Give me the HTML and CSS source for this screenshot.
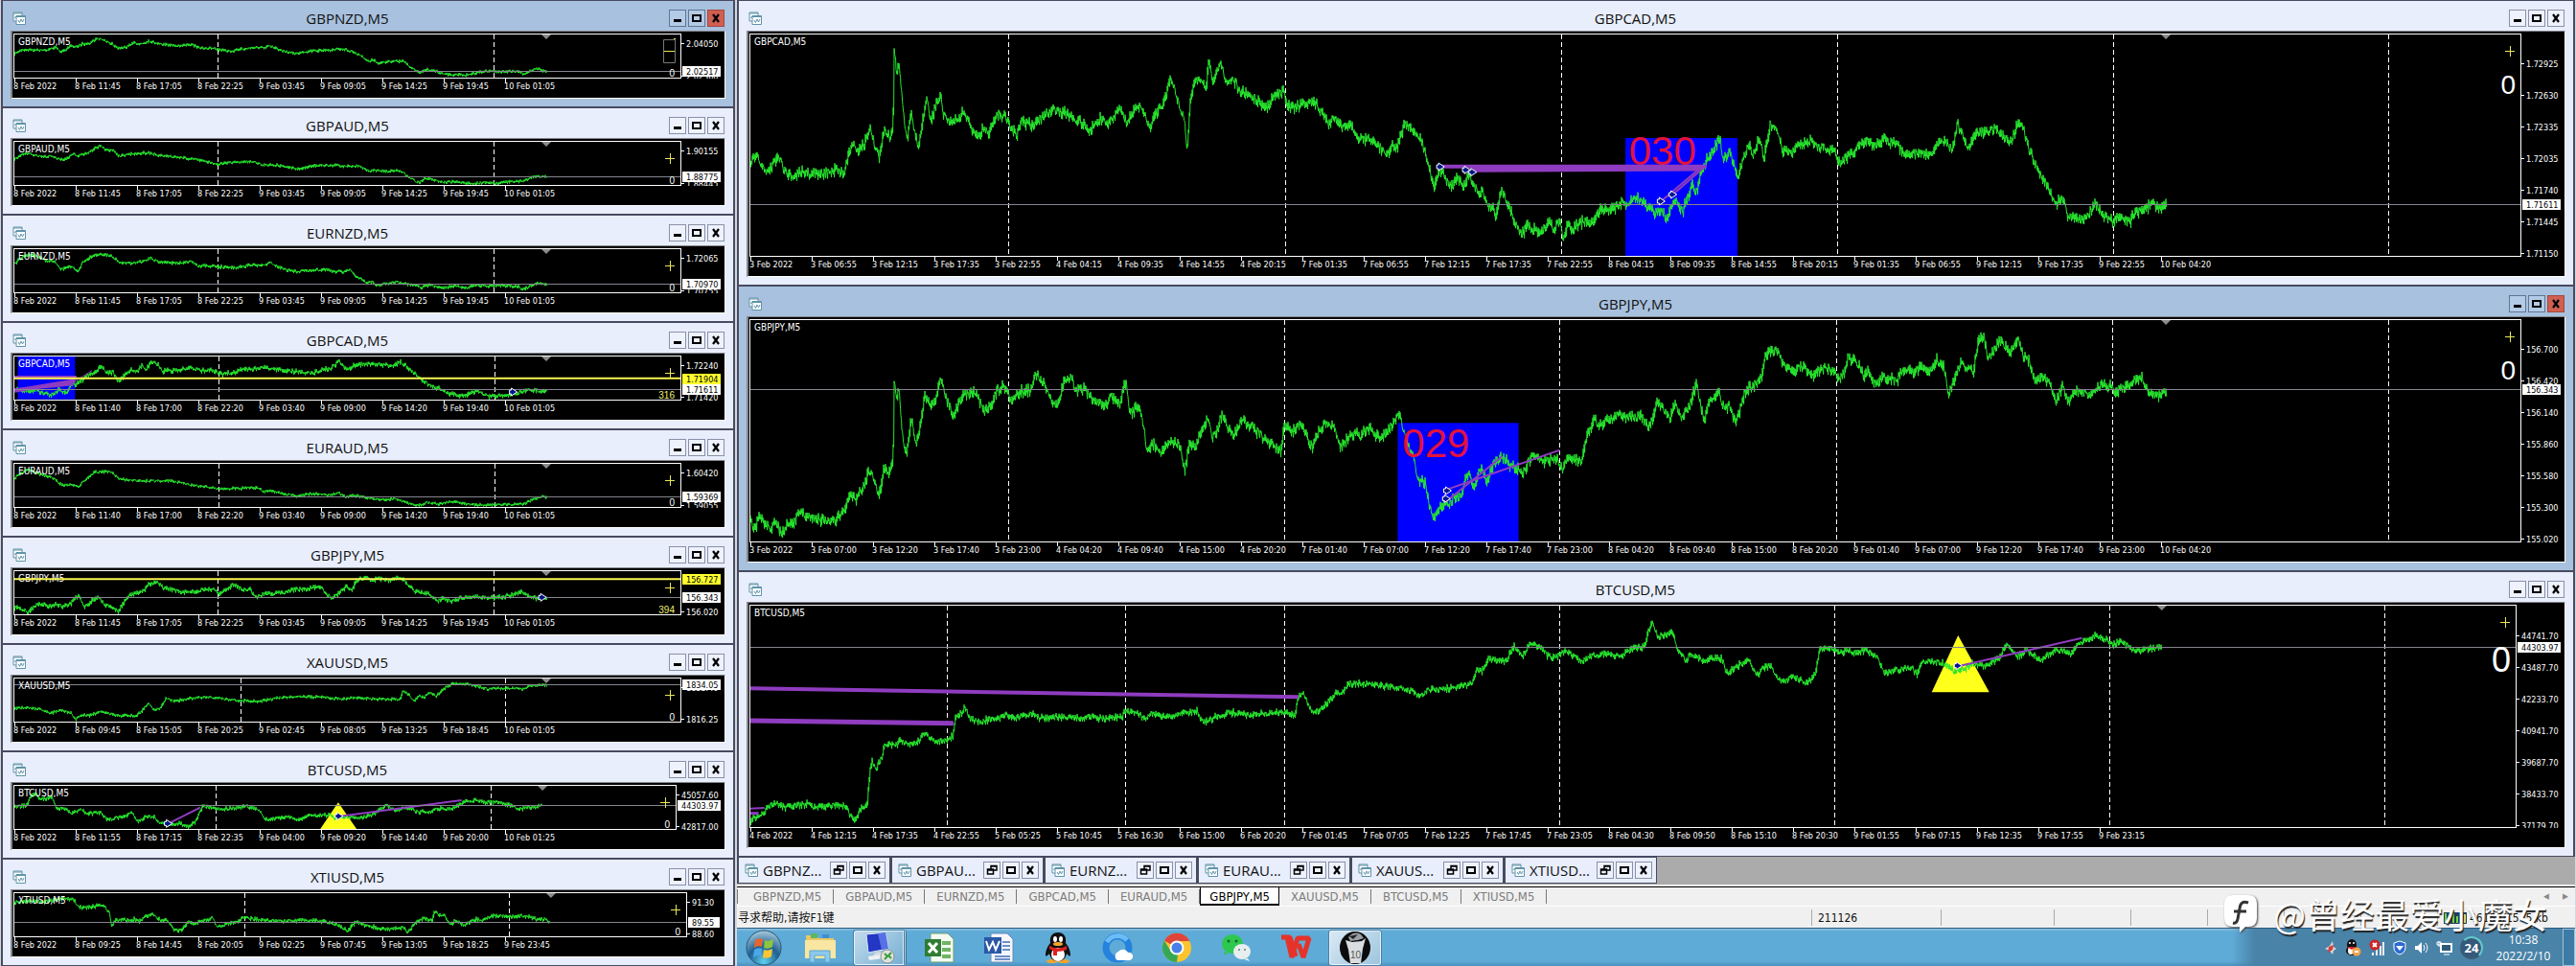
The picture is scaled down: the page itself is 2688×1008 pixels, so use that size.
FILE: index.html
```html
<!DOCTYPE html>
<html lang="zh-CN">
<head>
  <meta charset="utf-8">
  <title>GBPJPY,M5</title>
  <link rel="stylesheet" href="styles.css">
</head>
<body>
  <svg class="defs" width="0" height="0" aria-hidden="true">
    <symbol id="i-chart" viewBox="0 0 14 14">
      <path d="M1 1h9v9H1z" fill="#fff" stroke="#5f93a8"/>
      <path d="M1 2h9" stroke="#5f93a8"/>
      <path d="M2.500 7l1-2 1 1" stroke="#5f93a8" fill="none"/>
      <path d="M4 4.500h9.500v9H4z" fill="#fff" stroke="#5f93a8"/>
      <path d="M4 5.500h9.500" stroke="#5f93a8"/>
      <path d="M6 9l1.500 2.500L9 8l1.500 3L12 8" fill="none" stroke="#5f93a8"/>
    </symbol>
    <symbol id="i-min" viewBox="0 0 16 16"><path d="M4 9h8v3H4z"/></symbol>
    <symbol id="i-max" viewBox="0 0 16 16"><path d="M4 5h8v6H4z" fill="none" stroke="#000" stroke-width="2"/></symbol>
    <symbol id="i-close" viewBox="0 0 16 16"><path d="M5 4l6 8M11 4l-6 8" fill="none" stroke="#000" stroke-width="2.200"/></symbol>
    <symbol id="i-restore" viewBox="0 0 16 16"><path d="M7 7V3.500h6V8h-3M3.500 7h6v5h-6zM3 8h7M7 4h6" fill="none" stroke="#000" stroke-width="1.500"/></symbol>
  </svg>

  <div class="desktop">
    <section class="side" id="side"></section>

    <section class="main">
      <div class="stack" id="stack"></div>
      <div class="minimized" id="minimized"></div>

      <nav class="tabs">
        <a href="#">GBPNZD,M5</a>
        <a href="#">GBPAUD,M5</a>
        <a href="#">EURNZD,M5</a>
        <a href="#">GBPCAD,M5</a>
        <a href="#">EURAUD,M5</a>
        <a href="#" class="active">GBPJPY,M5</a>
        <a href="#">XAUUSD,M5</a>
        <a href="#">BTCUSD,M5</a>
        <a href="#">XTIUSD,M5</a>
        <span class="arrows"><button aria-label="Scroll left">◂</button><button aria-label="Scroll right">▸</button></span>
      </nav>

      <div class="status">
        <span class="help">寻求帮助,请按F1键</span>
        <span class="profile">211126</span>
        <span class="wide"></span>
        <span></span>
        <span></span>
        <span></span>
        <span></span>
        <span></span>
        <span class="traffic">
          <svg width="24" height="12" viewBox="0 0 24 12"><path d="M0 0h24v12H0z" fill="#20405c"/><path d="M2 1v10M6 3v8M10 1v10M14 4v7" stroke="#7bd13a" stroke-width="2"/><path d="M18 1v10M22 2v9" stroke="#d9dd7a" stroke-width="2"/></svg>
          46153/1545 kb
        </span>
      </div>

      <footer class="taskbar">
        <button class="task start" aria-label="Start">
          <svg width="38" height="38" viewBox="0 0 38 38">
            <defs><radialGradient id="orb" cx=".5" cy=".9" r=".9"><stop offset="0" stop-color="#5fd0ee"/><stop offset=".5" stop-color="#1f5f92"/><stop offset="1" stop-color="#a9cbdc"/></radialGradient></defs>
            <circle cx="19" cy="19" r="18" fill="url(#orb)" stroke="#285573"/>
            <path d="M10 11q4-3 8-1l-1 8q-4-2-8 1z" fill="#e8642c"/>
            <path d="M20 11q4 2 9-1l-1 8q-4 3-9 1z" fill="#8cc63f"/>
            <path d="M9 21q4-3 8-1l-1 8q-4-2-8 1z" fill="#4aa8e8"/>
            <path d="M19 21q4 2 9-1l-1 8q-4 3-9 1z" fill="#fbc62f"/>
          </svg>
        </button>
        <button class="task" aria-label="Explorer">
          <svg width="36" height="34" viewBox="0 0 36 34">
            <path d="M3 4h11l2 3h16v20H3z" fill="#e9c766"/><path d="M8 2h7v5H8z" fill="#5cb85c"/><path d="M20 3h7v4h-7z" fill="#3f8fd0"/>
            <path d="M2 9h32v19H2z" fill="#f9e6a2"/><path d="M7 32V20h21v12h-5v-7H12v7z" fill="#8dc9ec" stroke="#5aa5d0"/>
          </svg>
        </button>
        <button class="task on double" aria-label="Remote desktop">
          <svg width="36" height="34" viewBox="0 0 36 34">
            <path d="M5 3l20-2 3 17-21 4z" fill="#2336c4" stroke="#dfe6f3"/><path d="M17 2l8-1 3 17-7 1z" fill="#5670e6"/>
            <path d="M14 22l6-1 2 5H12z" fill="#d7dce4"/><path d="M7 26l15-2 1 4-15 2z" fill="#eef1f5"/>
            <circle cx="27" cy="26" r="7" fill="#dfe3e0" stroke="#89938c"/><path d="M24 23l3 3-3 3M31 22l-3 3 3 3" stroke="#3b9c3a" stroke-width="2" fill="none"/>
          </svg>
        </button>
        <button class="task" aria-label="Excel">
          <svg width="34" height="32" viewBox="0 0 34 32">
            <path d="M8 1h18l6 6v24H8z" fill="#f3faf2" stroke="#6f9f6a"/><path d="M20 9h9v4h-9zM20 16h9v4h-9zM20 23h9v4h-9z" fill="#6fb463"/>
            <path d="M2 7h17v18H2z" fill="#2f7d32"/><path d="M6 11l9 10M15 11L6 21" stroke="#fff" stroke-width="3"/>
          </svg>
        </button>
        <button class="task" aria-label="Word">
          <svg width="34" height="32" viewBox="0 0 34 32">
            <path d="M9 1h17l6 6v24H9z" fill="#f4f7fc" stroke="#6e88b8"/><path d="M21 10h8M21 14h8M21 18h8M13 25h16M13 28h16" stroke="#6d8fc8" stroke-width="2"/>
            <path d="M2 5h18v17H2z" fill="#2a57a5"/><path d="M4 9l3 9 4-8 3 8 4-9" stroke="#fff" stroke-width="2" fill="none"/>
          </svg>
        </button>
        <button class="task" aria-label="QQ">
          <svg width="30" height="34" viewBox="0 0 30 34">
            <ellipse cx="9" cy="31" rx="6" ry="2" fill="#f2a42b"/><ellipse cx="21" cy="31" rx="6" ry="2" fill="#f2a42b"/>
            <path d="M15 1c-6 0-9 4-8 11-4 5-5 9-5 13 1 2 3-1 4-2 1 5 4 8 9 8s8-3 9-8c1 1 3 4 4 2 0-4-1-8-5-13 1-7-2-11-8-11z" fill="#111"/>
            <ellipse cx="15" cy="24" rx="7" ry="7" fill="#fff"/><ellipse cx="12" cy="8" rx="2" ry="3" fill="#fff"/><ellipse cx="18" cy="8" rx="2" ry="3" fill="#fff"/>
            <ellipse cx="15" cy="13" rx="5" ry="2" fill="#f2a42b"/><path d="M6 15q9 5 18 0v4q-5 2-10 2v4h-4v-5l-4-2z" fill="#e02020"/>
          </svg>
        </button>
        <button class="task" aria-label="QQ Browser">
          <svg width="34" height="32" viewBox="0 0 34 32">
            <circle cx="17" cy="16" r="12" fill="none" stroke="#2583dd" stroke-width="7"/><path d="M6 10a13 13 0 0 1 21-2" fill="none" stroke="#6bbcf5" stroke-width="5"/>
            <path d="M17 29a5 5 0 0 1 1-9 6 6 0 0 1 10 1 4 4 0 0 1 2 8z" fill="#fff"/>
          </svg>
        </button>
        <button class="task" aria-label="Chrome">
          <svg width="32" height="32" viewBox="0 0 32 32">
            <circle cx="16" cy="16" r="15" fill="#fbc42d"/><path d="M16 16L3 8.500A15 15 0 0 1 29.500 9H16z" fill="#e0453a"/>
            <path d="M16 31A15 15 0 0 1 3 8.500L10 20l7 3z" fill="#36a853"/><circle cx="16" cy="16" r="7.500" fill="#fff"/><circle cx="16" cy="16" r="5.500" fill="#4a7fe8"/>
          </svg>
        </button>
        <button class="task" aria-label="WeChat">
          <svg width="34" height="30" viewBox="0 0 34 30">
            <path d="M5 19l-1 4 5-3z" fill="#2dc84f"/><ellipse cx="13" cy="11" rx="11" ry="10" fill="#2dc84f"/><circle cx="9" cy="8" r="1.500" fill="#17642a"/><circle cx="17" cy="8" r="1.500" fill="#17642a"/>
            <path d="M29 26l2 3-6-2z" fill="#e6eeee"/><ellipse cx="23" cy="19" rx="9" ry="8" fill="#e6eeee"/><circle cx="20" cy="17" r="1" fill="#6b7b7b"/><circle cx="26" cy="17" r="1" fill="#6b7b7b"/>
          </svg>
        </button>
        <button class="task" aria-label="WPS Office">
          <svg width="34" height="28" viewBox="0 0 34 28">
            <path d="M2 3h9l6 20M8 3l5 21 6-20h12l-6 20-5-14" fill="none" stroke="#e5332a" stroke-width="5" stroke-linejoin="bevel"/>
          </svg>
        </button>
        <button class="task on" aria-label="Trader">
          <svg width="32" height="36" viewBox="0 0 32 36">
            <ellipse cx="16" cy="18" rx="16" ry="17" fill="#0c0c0c"/><path d="M6 10l7 2 10-1 4-3-3 11-2 15H11L9 20z" fill="#d9dde0"/>
            <path d="M9 7q6-7 13-3l3 4-6 2-8 1z" fill="#9ba0a5"/><path d="M10 6l9-2-5 5z" fill="#222"/><text x="11" y="29" font-family="Liberation Sans" font-size="10" fill="#555">10</text>
          </svg>
        </button>

        <div class="tray">
          <svg width="14" height="16" viewBox="0 0 14 16"><path d="M1 9l5-3 3-5 1 6 3 2-3 2-1 4-3-4z" fill="#d8d4d6"/><path d="M5 7l5-2-1 5-5 3z" fill="#d43c3a"/></svg>
          <svg width="18" height="18" viewBox="0 0 18 18"><ellipse cx="8" cy="6" rx="5" ry="6" fill="#111"/><ellipse cx="8" cy="12" rx="6" ry="5" fill="#111"/><ellipse cx="7" cy="12" rx="3" ry="4" fill="#fff"/><circle cx="6" cy="4" r="1" fill="#fff"/><circle cx="10" cy="4" r="1" fill="#fff"/><path d="M3 8h9l-4 3z" fill="#e02020"/><circle cx="13" cy="13" r="4.500" fill="#f3a24c"/><path d="M11 13h4" stroke="#fff" stroke-width="2"/></svg>
          <svg width="18" height="18" viewBox="0 0 18 18"><path d="M5 17v-3M9 17v-6M13 17V7M16 17V3" stroke="#eceff2" stroke-width="2"/><circle cx="7" cy="6" r="5.500" fill="#cf2426"/><path d="M5 4l4 4M9 4L5 8" stroke="#fff" stroke-width="2"/></svg>
          <svg width="16" height="16" viewBox="0 0 16 16"><path d="M8 1l6 2v5q0 5-6 7-6-2-6-7V3z" fill="#2a6bd2" stroke="#fff"/><path d="M4 6h8l-4 5z" fill="#fff"/></svg>
          <svg width="16" height="16" viewBox="0 0 16 16"><path d="M1 6h3l4-4v12l-4-4H1z" fill="#fff"/><path d="M10 5q2 3 0 6M12 3q4 5 0 10" stroke="#fff" fill="none"/></svg>
          <svg width="18" height="16" viewBox="0 0 18 16"><path d="M5 4h11v8H5z" fill="#2d5a78" stroke="#fff" stroke-width="2"/><path d="M8 15h6M3 1v6M1 2h4v3H1z" stroke="#fff" fill="none"/></svg>
          <span class="temp">24</span>
          <time class="clock">10:38<br>2022/2/10</time>
          <button class="peek" aria-label="Show desktop"></button>
        </div>
      </footer>
    </section>
  </div>

  <div class="watermark">
    <svg width="36" height="40" viewBox="0 0 36 40">
      <path d="M10 1h16q9 0 9 9v15q0 9-9 9h-3l-6 6v-6h-7q-9 0-9-9V10q0-9 9-9z" fill="#fff"/>
      <path d="M26 9q-8-3-9 6l-2 11q-1 5-5 4M11 18h13" fill="none" stroke="#333" stroke-width="3"/>
    </svg>
    <span>@曾经最爱小魔女</span>
  </div>

  <script src="charts.js"></script>
</body>
</html>
```
FILE: styles.css
```css
* {
  box-sizing: border-box;
}

body {
  margin: 0;
  background: #d4d7e0;
  color: #111;
  font-family: "DejaVu Sans Condensed", "Noto Sans CJK SC", sans-serif;
  font-size: 12px;
}

button {
  padding: 0;
  border: 0;
  background: none;
  font: inherit;
}

a {
  color: inherit;
  text-decoration: none;
}

.defs {
  position: absolute;
}

.desktop {
  display: grid;
  grid-template-columns: minmax(0, 766fr) minmax(0, 1918fr);
  grid-template-rows: minmax(0, 1fr);
  gap: 2px;
  height: 100vh;
  padding: 0 1px;
}

.side {
  display: grid;
  grid-template-rows: repeat(9, minmax(0, 1fr));
}

.main {
  display: flex;
  flex-direction: column;
  min-width: 0;
}

.stack {
  flex: 1;
  display: grid;
  grid-template-rows: repeat(3, minmax(0, 1fr));
  min-height: 0;
}

/* chart windows */

.win {
  display: flex;
  flex-direction: column;
  min-height: 0;
  padding: 0 8px 8px;
  border: solid #474b60;
  border-width: 1px 2px;
  background: #e8eefc;
}

.win.active {
  background: #a8c1de;
}

.bar {
  flex: none;
  display: flex;
  align-items: center;
  height: 31px;
  padding: 4px 1px 0 2px;
}

.bar h2 {
  flex: 1;
  margin: 0;
  font: 15px/24px "Open Sans", "Noto Sans", sans-serif;
  text-align: center;
}

.icon {
  width: 14px;
  height: 14px;
}

.controls {
  display: flex;
  gap: 2px;
}

.controls button {
  width: 18px;
  height: 18px;
  border: 1px solid #8a90a6;
  background: #edf2fd;
}

.controls svg {
  display: block;
  width: 16px;
  height: 16px;
}

.active .controls button {
  border-color: #5e7596;
  background: #b4cbe6;
}

.active .controls button:last-child {
  border-color: #a8463c;
  background: #cf5f51;
}

.well {
  flex: 1;
  display: grid;
  grid-template-columns: minmax(0, 1fr) auto;
  grid-template-rows: minmax(0, 1fr) 20px;
  min-height: 0;
  padding: 2px 0 0 1px;
  border: 2px solid #84868c;
  border-width: 1px 1px 1px 2px;
  border-right-color: #fff;
  border-bottom-color: #fff;
  background: #000;
}

.plot {
  width: 100%;
  height: 100%;
  border: 1px solid #fff;
}

.prices {
  height: 100%;
}

.prices.short { width: 39px; }
.prices.normal { width: 45px; }
.prices.long { width: 50px; }

.prices text {
  fill: #fff;
  font-size: 9px;
}

.prices .tag {
  fill: #000;
}

.times {
  grid-column: 1 / -1;
  display: flex;
  margin: 0;
  padding: 0;
  overflow: hidden;
  list-style: none;
  color: #fff;
  font-size: 9px;
  line-height: 17px;
  white-space: nowrap;
}

.times li {
  flex: none;
  width: 64px;
  background: linear-gradient(#fff, #fff) 1px 0 / 1px 4px no-repeat;
}

/* plot contents */

.name {
  fill: #fff;
  font-size: 10px;
}

.series {
  fill: none;
  stroke: #27e62e;
}

.day {
  stroke: #fff;
  stroke-dasharray: 5 3;
}

.bid {
  stroke: #85858f;
}

.shift {
  fill: #8b8b8b;
}

.plus {
  stroke: #e9e659;
}

.count {
  fill: #fff;
  font-family: "Liberation Sans", Arial, sans-serif;
  text-anchor: end;
}

.count.hit {
  fill: #f2ee6e;
}

.note {
  fill: #e3123c;
  font-family: "Liberation Sans", Arial, sans-serif;
}

.point {
  fill: #00148c;
  stroke: #fff;
}

/* minimized windows */

.minimized {
  display: flex;
  height: 31px;
  border-bottom: 2px solid #f3f3f3;
  background: #ababab;
}

.mini {
  display: flex;
  align-items: center;
  width: 160px;
  height: 28px;
  padding: 0 4px 0 6px;
  border: 1px solid #474b60;
  border-left-width: 2px;
  background: #e8eefc;
}

.mini h3 {
  flex: 1;
  margin: 0 0 0 5px;
  font: 15px/24px "Open Sans", "Noto Sans", sans-serif;
}

/* tabs and status bar */

.tabs {
  display: flex;
  height: 20px;
  border-top: 1px solid #000;
  background: #f0f0f0;
  color: #7c7c7c;
  font-size: 13px;
  line-height: 18px;
}

.tabs a {
  margin: 2px 0;
  padding: 0 12px;
  border-right: 1px solid #777;
  line-height: 15px;
}

.tabs a:first-child {
  padding-left: 16px;
  border-left: 1px solid #777;
}

.tabs .active {
  margin: 0;
  padding: 0 9px;
  border: solid #000;
  border-width: 0 1px 2px;
  background: #fff;
  color: #000;
  line-height: 19px;
}

.arrows {
  margin-left: auto;
}

.arrows button {
  width: 20px;
  color: #888;
}

.status {
  display: flex;
  height: 23px;
  border-top: 1px solid #fff;
  background: #f0f0f0;
}

.status span {
  width: 80px;
  margin: 3px 0 2px;
  padding-left: 6px;
  border-left: 1px solid #aaa;
  line-height: 18px;
}

.status .help {
  flex: 1;
  padding-left: 1px;
  border: 0;
}

.status .profile {
  width: 135px;
}

.status .wide {
  width: 118px;
}

.status .traffic {
  display: flex;
  align-items: center;
  gap: 3px;
  width: 144px;
}

/* taskbar */

.taskbar {
  display: flex;
  align-items: center;
  height: 40px;
  border-top: 1px solid #2c5b80;
  background: linear-gradient(#8fc3e2 0, #5fabd7 3px, #5fabd7 34px, #4a90bd 100%);
}

.task {
  display: grid;
  place-items: center;
  width: 56px;
  height: 38px;
  margin: 0 3px;
}

.task.start {
  margin: 0;
}

.task.on {
  border: 1px solid #4d7fa3;
  border-radius: 3px;
  background: linear-gradient(135deg, #dbeaf4, #9cc4de);
  box-shadow: inset 0 0 0 1px #e4f1f9;
}

.task.on.double {
  border-right: 3px double #3d7196;
  background: linear-gradient(135deg, #c3dcec, #74afd3);
}

.tray {
  display: flex;
  align-items: center;
  align-self: stretch;
  gap: 7px;
  width: 358px;
  margin-left: auto;
  justify-content: flex-end;
  background: linear-gradient(90deg, #5fabd700 0, #4983a8 24px);
  color: #fff;
}

.temp {
  width: 24px;
  border: 2px solid #3a5d78;
  border-top-color: #63c9c9;
  border-right-color: #63c9c9;
  border-radius: 50%;
  background: #35597a;
  font: bold 13px/20px "Open Sans", sans-serif;
  text-align: center;
}

.clock {
  width: 70px;
  margin-right: -1px;
  font: 12px/17px "Open Sans", "Noto Sans", sans-serif;
  text-align: center;
}

.peek {
  align-self: stretch;
  width: 13px;
  border: 1px solid #9cc5dd;
  background: #3c7ba5;
}

/* sits above the status bar and the taskbar */
.watermark {
  position: absolute;
  right: 30px;
  bottom: 34px;
  display: flex;
  align-items: center;
  gap: 16px;
  color: #fff;
  font: 36px/42px "Noto Sans CJK SC", sans-serif;
  text-shadow: 1px 2px 1px #222;
  pointer-events: none;
}

.watermark svg {
  filter: drop-shadow(1px 1px 1px #444);
}
```
FILE: charts.js
```js
const PURPLE = '#8f3cc0';

// Samples are recorded in sheet units, unitX and unitY of them to a pixel.
const SMALL = { x0: 30, unitX: 2.036, unitY: 3 };
const LARGE = { x0: 21, unitX: 1.633, unitY: 3 };

const T45 = '8 Feb 2022|8 Feb 11:45|8 Feb 17:05|8 Feb 22:25|9 Feb 03:45|9 Feb 09:05|9 Feb 14:25|9 Feb 19:45|10 Feb 01:05';
const T40 = '8 Feb 2022|8 Feb 11:40|8 Feb 17:00|8 Feb 22:20|9 Feb 03:40|9 Feb 09:00|9 Feb 14:20|9 Feb 19:40|10 Feb 01:05';

const small = [
  {
    name: 'GBPNZD,M5', active: true, y0: 106, amp: 9, bid: 223, tag: '2.02517', shift: 1160, boxed: true,
    days: [461, 1048], prices: [['2.04050', 136], ['2.02360', 239]], times: T45,
    data: '30,165 40,158 55,153 75,156 100,155 115,146 128,158 138,158 150,138 160,145 175,135 190,135 200,122 210,119 225,128 237,135 248,150 265,146 285,133 300,135 315,126 335,135 360,140 385,142 405,137 425,150 445,148 465,155 490,158 510,152 540,147 560,148 572,141 585,150 605,160 630,166 655,158 690,156 715,152 735,154 755,165 770,175 783,192 790,185 805,196 830,190 855,190 875,212 890,225 905,216 925,222 950,232 995,233 1015,225 1040,219 1060,223 1100,221 1112,230 1125,219 1145,214 1160,224'
  },
  {
    name: 'GBPAUD,M5', y0: 442, amp: 9, bid: 553, tag: '1.88775', shift: 1160,
    days: [461, 1048], prices: [['1.90155', 472], ['1.88445', 573]], times: T45,
    data: '30,497 45,482 60,478 90,490 110,485 125,497 140,497 155,480 165,485 185,478 200,462 212,455 225,467 240,468 250,487 270,482 290,478 315,476 335,485 360,488 395,493 425,500 460,511 490,507 535,503 555,513 590,515 630,528 660,517 710,515 735,519 760,517 785,534 800,530 820,535 850,532 865,550 890,571 900,558 915,560 935,568 960,568 1000,573 1030,569 1055,572 1080,567 1110,566 1130,552 1160,550'
  },
  {
    name: 'EURNZD,M5', y0: 778, amp: 10, bid: 889, tag: '1.70970', shift: 1160,
    days: [461, 1048], prices: [['1.72065', 808], ['1.70755', 909]], times: T45,
    data: '30,823 45,805 60,795 80,800 100,817 115,815 130,842 145,830 165,845 175,820 195,800 205,793 235,798 255,822 280,822 300,818 318,806 335,818 380,822 405,817 420,830 460,832 500,838 530,828 560,830 573,818 590,835 620,848 650,845 690,842 710,850 720,842 730,852 740,840 760,868 780,885 790,880 800,892 825,885 845,880 870,890 895,898 915,890 940,900 970,893 990,900 1010,890 1040,894 1080,892 1100,895 1110,905 1125,892 1145,885 1160,890'
  },
  {
    name: 'GBPCAD,M5', y0: 106, amp: 14, bid: 212, tag: '1.71611', shift: 1160, count: '316',
    days: [463, 1050], prices: [['1.72240', 136], ['1.71420', 236]], times: T40,
    target: ['1.71904', 177],
    rects: [[37, 106, 159, 240]],
    lines: [[30, 172, 162, 172, 4], [30, 213, 160, 182, 4], [30, 210, 155, 192, 3], [150, 192, 195, 150, 1]],
    points: [[1090, 217]],
    data: '30,208 60,215 75,210 90,222 110,225 125,210 140,220 150,195 165,190 185,165 200,155 215,135 225,160 240,155 250,185 265,165 275,148 290,155 300,135 310,145 322,122 335,130 345,152 370,150 405,142 430,150 450,150 470,162 500,155 520,145 560,143 600,148 640,155 665,157 685,145 700,145 720,122 735,148 745,140 760,130 800,132 840,133 850,122 865,140 880,158 900,185 925,205 940,210 955,222 980,230 1000,220 1012,212 1030,228 1050,232 1080,225 1100,220 1130,210 1145,213 1160,212'
  },
  {
    name: 'EURAUD,M5', y0: 442, amp: 9, bid: 547, tag: '1.59369', shift: 1160,
    days: [463, 1050], prices: [['1.60420', 472], ['1.59055', 573]], times: T40,
    data: '30,487 45,470 60,460 85,475 110,485 130,508 155,508 165,515 180,492 200,468 235,467 250,488 280,495 320,495 360,495 400,507 430,513 460,520 510,519 525,515 550,520 560,530 575,527 600,535 630,543 660,536 700,540 718,532 735,547 750,540 780,548 810,555 840,550 860,563 890,572 905,563 930,567 960,560 990,567 1030,572 1080,569 1110,569 1130,555 1150,546 1160,548'
  },
  {
    name: 'GBPJPY,M5', y0: 778, amp: 14, bid: 861, tag: '156.343', shift: 1160, count: '394',
    days: [461, 1048], prices: [['156.020', 908]], times: T45,
    target: ['156.727', 806],
    points: [[1152, 860]],
    data: '30,893 45,895 60,908 75,885 90,880 105,888 120,882 135,890 150,878 165,855 180,890 195,870 210,860 220,882 235,888 250,905 270,858 285,850 305,840 315,818 335,815 345,830 370,838 400,845 430,835 455,835 465,850 480,835 495,820 515,838 530,835 542,860 560,850 600,845 630,835 655,832 680,828 690,845 705,865 720,845 735,825 745,838 762,800 780,797 790,812 800,800 825,808 850,797 865,820 880,840 905,848 920,860 930,872 940,860 955,872 980,862 1010,858 1050,862 1080,855 1110,843 1120,855 1140,864 1160,860'
  },
  {
    name: 'XAUUSD,M5', y0: 112, amp: 9, bid: 133, tag: '1834.05', shift: 1160,
    days: [510, 1072], prices: [['1833.40', 143], ['1816.25', 241]],
    times: '8 Feb 2022|8 Feb 09:45|8 Feb 15:05|8 Feb 20:25|9 Feb 02:45|9 Feb 08:05|9 Feb 13:25|9 Feb 18:45|10 Feb 01:05',
    data: '30,207 55,202 80,207 105,220 130,212 150,220 160,240 175,225 190,228 210,215 230,222 250,228 290,228 300,215 315,190 325,210 340,205 352,175 370,183 400,175 440,170 470,175 500,181 555,183 590,173 620,168 680,170 720,176 760,173 800,176 850,177 855,150 870,165 878,185 890,165 900,172 910,155 925,168 945,142 960,128 990,128 1010,135 1035,145 1070,142 1110,145 1125,135 1160,132'
  },
  {
    name: 'BTCUSD,M5', y0: 448, amp: 12, bid: 511, tag: '44303.97', shift: 1152, axis: 'long',
    days: [457, 1042], prices: [['45057.60', 478], ['42817.00', 577]],
    times: '8 Feb 2022|8 Feb 11:55|8 Feb 17:15|8 Feb 22:35|9 Feb 04:00|9 Feb 09:20|9 Feb 14:40|9 Feb 20:00|10 Feb 01:25',
    triangle: [[718, 500], [680, 583], [757, 583]],
    lines: [[357, 566, 425, 516, 2], [722, 543, 980, 493, 2]],
    points: [[357, 566], [720, 543]],
    data: '30,513 55,510 65,480 75,475 85,490 110,485 120,520 135,520 150,535 170,522 185,535 215,532 225,555 260,545 280,533 292,562 305,548 325,543 340,565 360,570 380,565 400,577 415,560 425,525 430,512 450,518 470,520 500,518 525,513 550,525 560,552 580,552 615,545 632,558 650,540 680,540 700,540 710,550 730,545 760,548 790,540 810,520 820,510 840,525 870,515 885,530 910,530 935,518 960,520 985,498 1010,492 1030,500 1060,500 1080,508 1100,520 1125,515 1150,510'
  },
  {
    name: 'XTIUSD,M5', y0: 784, amp: 12, bid: 877, tag: '89.55', shift: 1170, axis: 'short',
    days: [518, 1080], prices: [['91.30', 814], ['88.60', 914]],
    times: '8 Feb 2022|8 Feb 09:25|8 Feb 14:45|8 Feb 20:05|9 Feb 02:25|9 Feb 07:45|9 Feb 13:05|9 Feb 18:25|9 Feb 23:45',
    data: '30,812 60,808 90,812 125,803 155,803 165,825 180,830 200,825 220,820 232,850 236,885 245,870 260,868 275,870 285,865 295,873 310,855 325,850 340,870 355,868 370,900 385,900 400,875 415,880 430,870 450,862 462,890 480,880 500,875 515,862 560,868 590,872 660,868 700,877 720,885 738,903 755,872 775,885 800,892 825,898 855,890 866,908 880,880 900,862 918,868 922,838 935,855 942,848 957,885 965,868 985,885 1010,865 1025,870 1045,855 1080,857 1115,855 1140,867 1155,865 1168,878'
  }
];

const large = [
  {
    name: 'GBPCAD,M5', y0: 106, amp: 32, bid: 640, tag: '1.71611', shift: 2433, zero: 28,
    days: [461, 932, 1402, 1873, 2343, 2812],
    prices: [['1.72925', 200], ['1.72630', 298], ['1.72335', 397], ['1.72035', 496], ['1.71740', 596], ['1.71445', 695], ['1.71150', 793]],
    times: '3 Feb 2022|3 Feb 06:55|3 Feb 12:15|3 Feb 17:35|3 Feb 22:55|4 Feb 04:15|4 Feb 09:35|4 Feb 14:55|4 Feb 20:15|7 Feb 01:35|7 Feb 06:55|7 Feb 12:15|7 Feb 17:35|7 Feb 22:55|8 Feb 04:15|8 Feb 09:35|8 Feb 14:55|8 Feb 20:15|9 Feb 01:35|9 Feb 06:55|9 Feb 12:15|9 Feb 17:35|9 Feb 22:55|10 Feb 04:20',
    rects: [[1512, 430, 1703, 801]],
    note: ['030', 1518, 515, 42],
    lines: [[1197, 519, 1650, 519, 4], [1252, 530, 1640, 526, 5], [1593, 607, 1650, 515, 2], [1573, 628, 1642, 520, 2]],
    points: [[1197, 520], [1241, 530], [1252, 537], [1573, 628], [1593, 607]],
    data: '21,512 30,485 40,515 50,540 60,510 70,492 80,535 93,555 105,535 120,542 150,540 170,530 180,540 185,500 195,445 205,470 215,450 225,400 232,450 240,490 250,400 258,430 264,390 266,150 270,230 273,190 280,330 287,440 295,360 303,430 307,460 315,370 322,310 328,380 338,320 345,300 350,360 365,380 385,350 395,395 408,430 418,395 428,415 440,355 455,365 465,400 475,425 482,380 500,390 520,365 535,340 555,352 580,375 600,405 615,370 630,385 650,345 662,380 675,345 685,330 695,360 700,405 712,355 725,320 738,240 748,310 760,370 765,470 770,330 778,250 790,260 797,280 802,190 808,250 815,230 823,195 830,260 845,250 855,285 875,300 900,335 915,300 930,285 934,330 950,335 965,320 985,325 1000,370 1005,390 1015,368 1030,400 1045,395 1060,435 1075,435 1090,450 1105,490 1115,455 1122,465 1135,385 1150,410 1165,445 1172,490 1185,580 1195,530 1205,555 1215,590 1225,545 1235,590 1245,545 1260,600 1270,600 1278,650 1285,640 1290,680 1300,590 1315,650 1325,700 1335,730 1345,705 1368,728 1382,695 1390,715 1400,690 1406,760 1412,700 1420,715 1440,690 1455,695 1470,650 1490,655 1505,630 1515,640 1532,615 1545,640 1555,645 1562,670 1573,655 1583,680 1595,625 1610,660 1625,575 1633,600 1640,540 1657,480 1673,430 1677,495 1690,475 1703,560 1710,510 1722,450 1730,485 1740,430 1748,495 1758,390 1767,400 1780,470 1793,480 1805,455 1827,440 1840,460 1855,460 1868,475 1877,510 1890,488 1910,460 1920,440 1940,450 1953,430 1960,450 1970,440 1985,475 2010,480 2035,487 2043,450 2060,445 2068,470 2078,385 2095,465 2110,410 2125,415 2145,400 2155,425 2170,440 2180,390 2189,395 2200,470 2215,530 2230,580 2245,640 2255,610 2265,670 2287,690 2300,670 2313,635 2323,670 2340,690 2355,680 2373,688 2380,665 2395,660 2410,630 2423,650 2433,638'
  },
  {
    name: 'GBPJPY,M5', active: true, y0: 113, amp: 32, bid: 331, tag: '156.343', shift: 2433, zero: 28,
    days: [460, 930, 1400, 1871, 2341, 2812],
    prices: [['156.700', 206], ['156.420', 305], ['156.140', 403], ['155.860', 502], ['155.580', 601], ['155.300', 700], ['155.020', 799]],
    times: '3 Feb 2022|3 Feb 07:00|3 Feb 12:20|3 Feb 17:40|3 Feb 23:00|4 Feb 04:20|4 Feb 09:40|4 Feb 15:00|4 Feb 20:20|7 Feb 01:40|7 Feb 07:00|7 Feb 12:20|7 Feb 17:40|7 Feb 23:00|8 Feb 04:20|8 Feb 09:40|8 Feb 15:00|8 Feb 20:20|9 Feb 01:40|9 Feb 07:00|9 Feb 12:20|9 Feb 17:40|9 Feb 23:00|10 Feb 04:20',
    rects: [[1124, 435, 1330, 808]],
    note: ['029', 1132, 543, 42],
    lines: [[1210, 642, 1400, 520, 2], [1207, 680, 1302, 540, 2]],
    points: [[1209, 647], [1207, 672]],
    data: '21,740 28,770 36,725 45,750 55,770 65,745 73,785 85,745 92,760 105,715 125,735 145,738 165,742 175,715 182,715 190,650 200,675 215,630 222,590 232,610 240,670 248,580 258,590 264,560 266,290 270,380 273,320 280,480 287,540 295,420 303,510 310,440 318,350 328,390 338,350 344,290 352,350 368,415 380,355 400,340 410,360 418,400 430,380 442,330 455,320 465,370 480,335 498,335 508,280 520,310 535,375 545,370 555,310 566,285 575,335 590,330 600,355 625,385 635,350 650,375 656,330 661,310 665,380 672,405 680,380 690,430 697,530 708,500 720,530 735,490 752,500 761,590 768,500 780,510 790,450 800,420 808,480 815,470 824,405 835,460 845,470 860,425 880,455 900,490 925,525 931,440 945,460 960,440 978,515 990,460 1002,435 1015,440 1025,515 1045,470 1060,475 1075,450 1090,480 1105,465 1115,440 1126,410 1135,470 1150,540 1158,610 1170,620 1183,740 1195,700 1210,690 1218,670 1230,670 1243,590 1253,640 1265,570 1275,625 1288,560 1302,540 1315,565 1337,590 1355,535 1375,555 1395,545 1404,580 1412,545 1438,550 1443,490 1458,430 1470,440 1490,420 1500,405 1515,415 1540,415 1550,450 1560,410 1567,370 1575,385 1588,430 1595,375 1607,425 1622,380 1633,310 1645,430 1655,370 1671,330 1675,380 1690,385 1700,440 1708,385 1717,330 1730,320 1745,285 1752,215 1770,210 1780,250 1800,270 1815,255 1830,295 1845,265 1868,270 1875,300 1885,280 1891,230 1905,245 1918,285 1925,275 1938,320 1950,295 1975,300 1985,270 2000,275 2015,265 2030,275 2043,240 2055,260 2062,345 2070,305 2085,245 2095,270 2105,275 2112,190 2122,160 2130,235 2150,180 2168,215 2180,165 2190,230 2200,240 2208,300 2222,295 2235,310 2246,375 2256,315 2265,370 2280,335 2305,345 2320,320 2340,320 2346,335 2360,325 2380,300 2392,290 2400,330 2420,355 2433,330'
  },
  {
    name: 'BTCUSD,M5', y0: 125, amp: 20, bid: 256, tag: '44303.97', shift: 2426, zero: 36, axis: 'long',
    days: [355, 659, 930, 1399, 1868, 2337, 2805],
    prices: [['44741.70', 220], ['43487.70', 319], ['42233.70', 418], ['40941.70', 517], ['39687.70', 616], ['38433.70', 715], ['37179.70', 814]],
    times: '4 Feb 2022|4 Feb 12:15|4 Feb 17:35|4 Feb 22:55|5 Feb 05:25|5 Feb 10:45|5 Feb 16:30|6 Feb 15:00|6 Feb 20:20|7 Feb 01:45|7 Feb 07:05|7 Feb 12:25|7 Feb 17:45|7 Feb 23:05|8 Feb 04:30|8 Feb 09:50|8 Feb 15:10|8 Feb 20:30|9 Feb 01:55|9 Feb 07:15|9 Feb 12:35|9 Feb 17:55|9 Feb 23:15',
    triangle: [[2079, 218], [2034, 396], [2132, 396]],
    lines: [[21, 384, 955, 411, 4], [21, 485, 367, 493, 5], [21, 760, 45, 758, 2], [21, 775, 35, 775, 3], [2079, 315, 2290, 226, 2]],
    points: [[2079, 313]],
    data: '21,800 30,785 42,780 50,755 65,745 80,755 100,750 123,745 130,760 150,752 185,750 190,785 200,795 210,760 220,755 224,650 228,610 234,640 245,600 250,560 270,560 278,545 290,560 308,550 318,525 335,550 350,548 366,535 370,470 380,460 386,445 395,480 412,490 430,478 445,480 458,465 470,480 498,462 515,478 540,475 570,477 600,475 630,480 655,470 660,457 680,462 692,480 705,462 730,475 760,462 783,455 787,480 795,492 810,475 840,460 870,468 900,460 935,460 948,470 955,410 962,395 970,430 978,455 990,455 1005,425 1020,400 1030,395 1040,368 1070,370 1100,376 1130,385 1147,390 1158,412 1175,388 1210,385 1250,372 1258,330 1268,330 1278,290 1295,300 1310,295 1322,250 1335,285 1350,245 1365,250 1378,280 1390,290 1410,268 1428,290 1440,298 1455,280 1480,275 1500,285 1520,265 1545,250 1552,200 1558,175 1567,225 1573,218 1592,207 1600,260 1615,300 1622,275 1640,295 1675,290 1685,335 1705,310 1722,298 1735,345 1745,320 1760,310 1768,350 1780,365 1798,345 1820,370 1835,340 1843,260 1860,260 1875,275 1890,265 1910,275 1920,260 1940,285 1952,335 1975,325 2000,320 2008,340 2018,300 2040,300 2058,310 2072,330 2090,320 2105,305 2125,315 2150,290 2155,265 2163,250 2180,285 2195,265 2220,295 2245,262 2272,275 2282,240 2300,235 2312,218 2330,230 2342,250 2355,235 2370,255 2385,268 2400,262 2425,255'
  }
];

const minimized = ['GBPNZ...', 'GBPAU...', 'EURNZ...', 'EURAU...', 'XAUUS...', 'XTIUSD...'];

// small seeded generator, so the ticks look the same on every load
let seed = 7;
function rand() {
  seed = (seed * 16807) % 2147483647;
  return seed / 2147483647 - 0.5;
}

function controls(first) {
  let icons = [[first, 'Minimize'], ['i-max', 'Maximize'], ['i-close', 'Close']];
  return '<div class="controls">' + icons.map(function (i) {
    return `<button aria-label="${i[1]}"><svg><use href="#${i[0]}"/></svg></button>`;
  }).join('') + '</div>';
}

// one high and one low for every pixel column
function seriesPath(chart, X, Y, sheet) {
  let pts = chart.data.split(' ').map(p => p.split(',').map(Number));
  let out = [];
  let k = 0;
  for (let u = pts[0][0]; u <= pts[pts.length - 1][0]; u += sheet.unitX) {
    while (k < pts.length - 2 && pts[k + 1][0] < u) k++;
    let [x1, y1] = pts[k];
    let [x2, y2] = pts[k + 1];
    let v = y1 + (y2 - y1) * (u - x1) / (x2 - x1);
    let spread = chart.amp * (0.2 + Math.abs(rand()) * 1.3) / 2;
    let drift = rand() * chart.amp * 0.7;
    out.push(X(u).toFixed(1) + ',' + Y(v + drift - spread).toFixed(1));
    out.push(X(u + 1).toFixed(1) + ',' + Y(v + drift + spread).toFixed(1));
  }
  return out.join(' ');
}

function plot(chart, sheet) {
  let X = u => (u - sheet.x0) / sheet.unitX;
  let Y = v => (v - chart.y0) / sheet.unitY;
  let svg = '';

  (chart.rects || []).forEach(function (r) {
    svg += `<rect x="${X(r[0])}" y="${Y(r[1])}" width="${X(r[2]) - X(r[0])}" height="${Y(r[3]) - Y(r[1])}" fill="#0000ff"/>`;
  });
  if (chart.triangle) {
    svg += `<polygon points="${chart.triangle.map(p => X(p[0]) + ',' + Y(p[1])).join(' ')}" fill="#ffff1c"/>`;
  }
  chart.days.forEach(function (u) {
    let x = Math.round(X(u)) + 0.5;
    svg += `<line class="day" x1="${x}" x2="${x}" y1="0" y2="100%"/>`;
  });
  svg += `<polyline class="series" points="${seriesPath(chart, X, Y, sheet)}"/>`;
  if (chart.note) {
    let [text, u, v, size] = chart.note;
    svg += `<text class="note" x="${X(u)}" y="${Y(v)}" font-size="${size}">${text}</text>`;
  }
  (chart.lines || []).forEach(function (l) {
    svg += `<line x1="${X(l[0])}" y1="${Y(l[1])}" x2="${X(l[2])}" y2="${Y(l[3])}" stroke="${PURPLE}" stroke-width="${l[4]}"/>`;
  });
  let bid = Math.round(Y(chart.bid)) - 0.5;
  svg += `<line class="bid" x1="0" x2="100%" y1="${bid}" y2="${bid}"/>`;
  (chart.points || []).forEach(function (p) {
    let x = X(p[0]), y = Y(p[1]);
    svg += `<path class="point" d="M${x - 4} ${y - 2}h2v-2l6 4-6 4v-2h-2z"/>`;
  });
  svg += `<text class="name" x="4" y="11">${chart.name}</text>`;
  if (chart.target) {
    let y = Y(chart.target[1]) - 1;
    svg += `<line x1="0" x2="100%" y1="${y}" y2="${y}" stroke="#f8f550" stroke-width="2"/>`;
  }
  let s = X(chart.shift);
  svg += `<path class="shift" d="M${s - 5} 0h10l-5 5z"/>`;

  // counter and toggle keep to the right edge
  svg += '<svg x="100%" overflow="visible">';
  if (chart.boxed) {
    svg += '<path d="M-17.500 5.500h12v24h-12z" fill="none" stroke="#777"/><path class="plus" d="M-17 17.500h11M-7 4.500h2"/>';
  } else {
    svg += '<path class="plus" d="M-16 17.500h10M-10.500 12v11"/>';
  }
  if (chart.zero) {
    svg += `<text class="count" x="-5" y="${chart.zero === 28 ? 62 : 69}" font-size="${chart.zero}">0</text>`;
  } else {
    svg += `<text class="count${chart.count ? ' hit' : ''}" x="-6" y="44" font-size="10">${chart.count || 0}</text>`;
  }
  svg += '</svg>';
  return `<svg class="plot" role="img" aria-label="${chart.name}">${svg}</svg>`;
}

function priceAxis(chart, sheet) {
  let Y = v => Math.round((v - chart.y0) / sheet.unitY);
  let kind = chart.axis || 'normal';
  let boxWidth = { short: 33, normal: 40, long: 45 }[kind];
  let svg = '';
  chart.prices.forEach(function (p) {
    svg += `<path d="M0 ${Y(p[1]) + 0.5}h3" stroke="#fff"/><text x="5" y="${Y(p[1]) + 4}">${p[0]}</text>`;
  });
  let tags = [[chart.tag, chart.bid, '#fff']];
  if (chart.target) tags.push([chart.target[0], chart.target[1], '#ffff2e']);
  tags.forEach(function (t) {
    svg += `<rect x="1" y="${Y(t[1]) - 5}" width="${boxWidth}" height="11" fill="${t[2]}"/><text class="tag" x="5" y="${Y(t[1]) + 4}">${t[0]}</text>`;
  });
  return `<svg class="prices ${kind}">${svg}</svg>`;
}

function chartWindow(chart, sheet) {
  let times = chart.times.split('|').map(t => `<li>${t}</li>`).join('');
  return `<article class="win${chart.active ? ' active' : ''}">
    <header class="bar">
      <svg class="icon"><use href="#i-chart"/></svg>
      <h2>${chart.name}</h2>
      ${controls('i-min')}
    </header>
    <div class="well">
      ${plot(chart, sheet)}
      ${priceAxis(chart, sheet)}
      <ul class="times">${times}</ul>
    </div>
  </article>`;
}

document.getElementById('side').innerHTML = small.map(c => chartWindow(c, SMALL)).join('');
document.getElementById('stack').innerHTML = large.map(c => chartWindow(c, LARGE)).join('');
document.getElementById('minimized').innerHTML = minimized.map(function (name) {
  return `<div class="mini"><svg class="icon"><use href="#i-chart"/></svg><h3>${name}</h3>${controls('i-restore')}</div>`;
}).join('');
```
